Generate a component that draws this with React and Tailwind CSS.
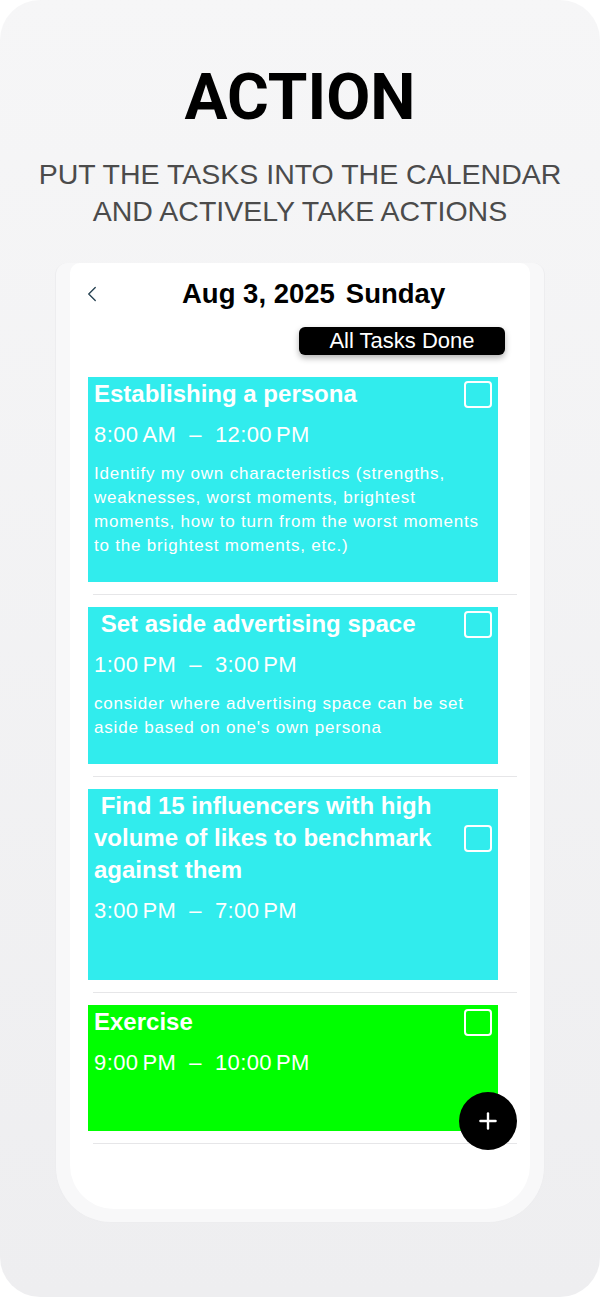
import React from 'react'
import { ChevronLeft, Plus } from 'lucide-react'

const tasks = [
    {
        title: 'Establishing a persona',
        start: ['8:00', 'AM'],
        end: ['12:00', 'PM'],
        desc: 'Identify my own characteristics (strengths, weaknesses, worst moments, brightest moments, how to turn from the worst moments to the brightest moments, etc.)',
        height: 'h-[205px]',
        color: 'bg-[#31eced]',
    },
    {
        title: ' Set aside advertising space',
        start: ['1:00', 'PM'],
        end: ['3:00', 'PM'],
        desc: "consider where advertising space can be set aside based on one's own persona",
        height: 'h-[157px]',
        color: 'bg-[#31eced]',
    },
    {
        title: ' Find 15 influencers with high volume of likes to benchmark against them',
        start: ['3:00', 'PM'],
        end: ['7:00', 'PM'],
        desc: '',
        height: 'h-[191px]',
        color: 'bg-[#31eced]',
    },
    {
        title: 'Exercise',
        start: ['9:00', 'PM'],
        end: ['10:00', 'PM'],
        desc: '',
        height: 'h-[126px]',
        color: 'bg-[#00ff00]',
    },
]

const TaskCard = ({ task }) => {
    return (
        <div className={`${task.height} ${task.color} w-[410px] pl-[6px] pr-[6px] pt-[1px] text-white font-['Liberation_Sans',Arial,sans-serif]`}>
            {/* title + checkbox */}
            <div className="flex items-center">
                <div className="flex-1 whitespace-pre-wrap text-[24px] leading-[32px] font-bold pr-[6px]">{task.title}</div>
                <div className="w-[28px] h-[27px] shrink-0 rounded-[4px] border-2 border-white"></div>
            </div>

            {/* time range */}
            <div className="mt-[10px] flex items-center text-[22px] leading-[30px] tracking-[0.4px]">
                <span>{task.start[0]}</span>
                <span className="ml-[4px]">{task.start[1]}</span>
                <span className="mx-[13px]">–</span>
                <span>{task.end[0]}</span>
                <span className="ml-[4px]">{task.end[1]}</span>
            </div>

            {task.desc && (
                <div className="mt-[12px] text-[17px] leading-[24px] tracking-[0.8px] font-light">{task.desc}</div>
            )}
        </div>
    )
}

const App = () => {
    return (
        <div className="w-[600px] h-[1299px] bg-white">
            <div className="h-[1297px] rounded-[40px] bg-gradient-to-b from-[#f6f6f7] to-[#eeeef0] flex flex-col items-center">
                {/* Heading */}
                <h1 className="mt-[66px] text-[64px] leading-[64px] font-bold tracking-[0px] text-black font-['Roboto','Liberation_Sans',sans-serif]">
                    ACTION
                </h1>
                <p className="mt-[26px] text-center text-[28.5px] leading-[37px] text-[#4b4b4b] font-['Liberation_Sans',Arial,sans-serif]">
                    PUT THE TASKS INTO THE CALENDAR
                    <br />
                    AND ACTIVELY TAKE ACTIONS
                </p>

                {/* Phone */}
                <div className="mt-[33px] w-[490px] h-[960px] rounded-t-[12px] rounded-b-[56px] bg-[#f8f8f9] border border-[#ededef] border-t-0 px-[14px] pb-[13px] flex">
                    <div className="relative flex-1 bg-white rounded-t-[10px] rounded-b-[44px] overflow-hidden">
                        {/* Header */}
                        <div className="pt-[13px] pl-[9px] flex items-center">
                            <ChevronLeft className="w-[26px] h-[26px] text-[#2b4656]" strokeWidth={1.3} />
                            <div className="ml-[77px] flex gap-[11px] text-[27.5px] leading-[36px] font-bold text-black font-['Liberation_Sans',Arial,sans-serif]">
                                <span>Aug 3, 2025</span>
                                <span>Sunday</span>
                            </div>
                        </div>

                        <div className="mt-[15px] flex justify-end pr-[25px]">
                            <div className="w-[206px] h-[28px] rounded-[6px] bg-black shadow-[0_3px_6px_rgba(0,0,0,0.3)] flex items-center justify-center text-white text-[22px] leading-[28px] font-['Liberation_Sans',Arial,sans-serif]">
                                All Tasks Done
                            </div>
                        </div>

                        {/* Task list */}
                        <div className="mt-[22px] flex flex-col">
                            {tasks.map((task, i) => (
                                <div key={i} className="flex flex-col">
                                    <div className="pl-[18px]">
                                        <TaskCard task={task} />
                                    </div>
                                    <div className="mt-[12px] mb-[12px] ml-[23px] mr-[13px] h-px bg-[#e6e6e8]"></div>
                                </div>
                            ))}
                        </div>

                        {/* Add button */}
                        <button className="absolute left-[389px] top-[829px] w-[58px] h-[58px] rounded-full bg-black flex items-center justify-center">
                            <Plus className="w-[26px] h-[26px] text-white" strokeWidth={2.2} />
                        </button>
                    </div>
                </div>
            </div>
        </div>
    )
}

export default App
